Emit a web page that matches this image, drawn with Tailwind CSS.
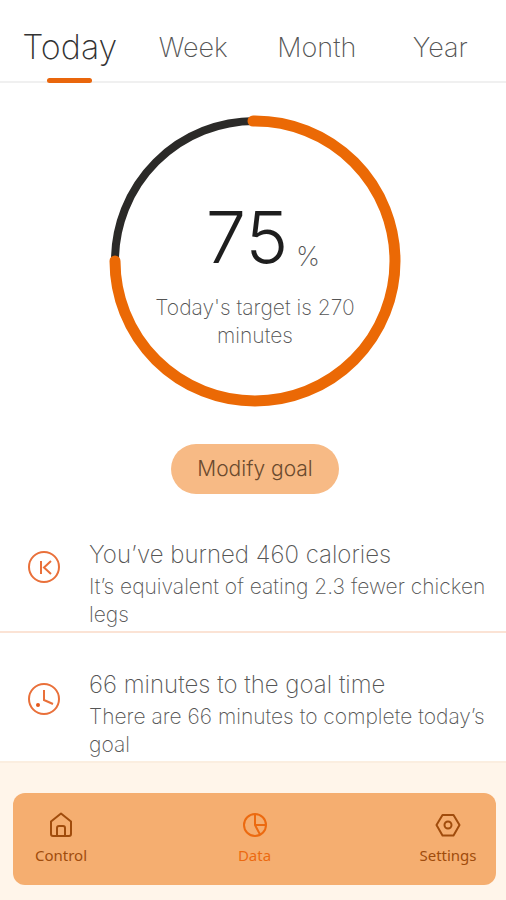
<!DOCTYPE html>
<html lang="en">
<head>
    <meta charset="UTF-8">
    <meta name="viewport" content="width=device-width, initial-scale=1.0">
    <title>Today - Data</title>
    <script src="https://cdn.jsdelivr.net/npm/@tailwindcss/browser@4"></script>
</head>
<body class="min-h-screen flex flex-col bg-white font-['Inter',sans-serif] font-light text-[#555555]">
    <!-- Period tabs -->
    <header class="border-b-2 border-[#f0f0f0] pl-2 pr-1 pt-6">
        <nav class="grid grid-cols-4 text-center">
            <a href="#today" class="relative flex h-[57px] justify-center text-[34px] leading-[46px] font-extralight text-[#333333]">
                Today
                <span class="absolute -bottom-0.5 h-[5px] w-[45px] rounded-full bg-[#e9660c]"></span>
            </a>
            <a href="#week" class="text-[27px] leading-[48px] font-extralight">Week</a>
            <a href="#month" class="text-[27px] leading-[48px] font-extralight">Month</a>
            <a href="#year" class="text-[27px] leading-[48px] font-extralight">Year</a>
        </nav>
    </header>

    <main class="flex flex-col">
        <!-- Progress ring -->
        <section class="flex flex-col items-center pt-8 pl-1">
            <div class="relative flex size-[292px] flex-col items-center">
                <svg class="absolute inset-0 size-full" viewBox="0 0 292 292" fill="none">
                    <path d="M6 146A140 140 0 0 1 146 6" stroke="#2b2a28" stroke-width="8"/>
                    <path d="M144 6H146A140 140 0 1 1 6 146" stroke="#eb6905" stroke-width="11" stroke-linecap="round" stroke-linejoin="round"/>
                </svg>
                <div class="relative flex items-end gap-2 pt-[82px] pl-4">
                    <span class="text-[72px] leading-20 text-[#1e1e1e]">75</span>
                    <span class="text-[27px] leading-10 font-extralight">%</span>
                </div>
                <p class="relative w-56 pt-[17px] text-center text-[21px] leading-7 font-extralight">Today's target is 270 minutes</p>
            </div>
            <button type="button" class="mt-[37px] h-[50px] w-[168px] rounded-full bg-[#f7ba85] text-[21px] text-[#6b4a2e]">Modify goal</button>
        </section>

        <!-- Stats -->
        <ul class="mt-[13px]">
            <li class="flex items-start border-b-2 border-[#fbe3d5] pt-8 pb-0.5 pl-7">
                <svg class="mt-3 size-8 shrink-0" viewBox="0 0 32 32" fill="none" stroke="#e9703a" stroke-width="2">
                    <circle cx="16" cy="16" r="15"/>
                    <path d="M13 10v13M23 10l-7 6.500 7 6.500"/>
                </svg>
                <div class="ml-[29px]">
                    <h2 class="text-2xl leading-8 font-extralight">You’ve burned 460 calories</h2>
                    <p class="mt-0.5 text-[21px] leading-7 font-extralight">It’s equivalent of eating 2.3 fewer chicken legs</p>
                </div>
            </li>
            <li class="flex items-start border-b-2 border-[#fbeee0] pt-9 pb-0.5 pl-7">
                <svg class="mt-3.5 size-8 shrink-0" viewBox="0 0 32 32" fill="none" stroke="#e9703a" stroke-width="2">
                    <circle cx="16" cy="16" r="15"/>
                    <path d="M16 7v10l9 4"/>
                    <circle cx="10" cy="22" r="2" fill="#e4581c" stroke="none"/>
                </svg>
                <div class="ml-[29px]">
                    <h2 class="text-2xl leading-8 font-extralight">66 minutes to the goal time</h2>
                    <p class="mt-0.5 text-[21px] leading-7 font-extralight">There are 66 minutes to complete today’s goal</p>
                </div>
            </li>
        </ul>
    </main>

    <!-- Bottom navigation -->
    <footer class="flex-1 bg-[#fff5ea] pt-[30px] pr-2.5 pb-3 pl-[13px]">
        <nav class="flex h-[92px] justify-between rounded-xl bg-[#f5ae70] px-4 pt-[18px] font-['Noto_Sans',sans-serif] text-[15px] leading-6 font-normal">
            <a href="#control" class="flex w-16 flex-col items-center gap-1 text-[#a04c0c]">
                <svg class="size-7" viewBox="0 0 28 28" fill="none" stroke="currentColor" stroke-width="2" stroke-linejoin="round">
                    <path d="M4 10.500L14 2.500l10 8V23a2 2 0 0 1-2 2H6a2 2 0 0 1-2-2z"/>
                    <path d="M10 25v-8a2 2 0 0 1 2-2h4a2 2 0 0 1 2 2v8"/>
                </svg>
                Control
            </a>
            <a href="#data" class="flex w-16 flex-col items-center gap-1 text-[#ec6a10]">
                <svg class="size-7" viewBox="0 0 28 28" fill="none" stroke="currentColor" stroke-width="2" stroke-linejoin="round">
                    <circle cx="14" cy="14" r="11"/>
                    <path d="M14 3v11l5 9.500M14 14h11"/>
                </svg>
                Data
            </a>
            <a href="#settings" class="flex w-16 flex-col items-center gap-1 text-[#a04c0c]">
                <svg class="size-7" viewBox="0 0 28 28" fill="none" stroke="currentColor" stroke-width="2" stroke-linejoin="round">
                    <path d="M8.500 4h11L25.500 14l-6 10.500h-11L2.500 14z"/>
                    <circle cx="14" cy="14" r="3.500"/>
                </svg>
                Settings
            </a>
        </nav>
    </footer>
</body>
</html>
